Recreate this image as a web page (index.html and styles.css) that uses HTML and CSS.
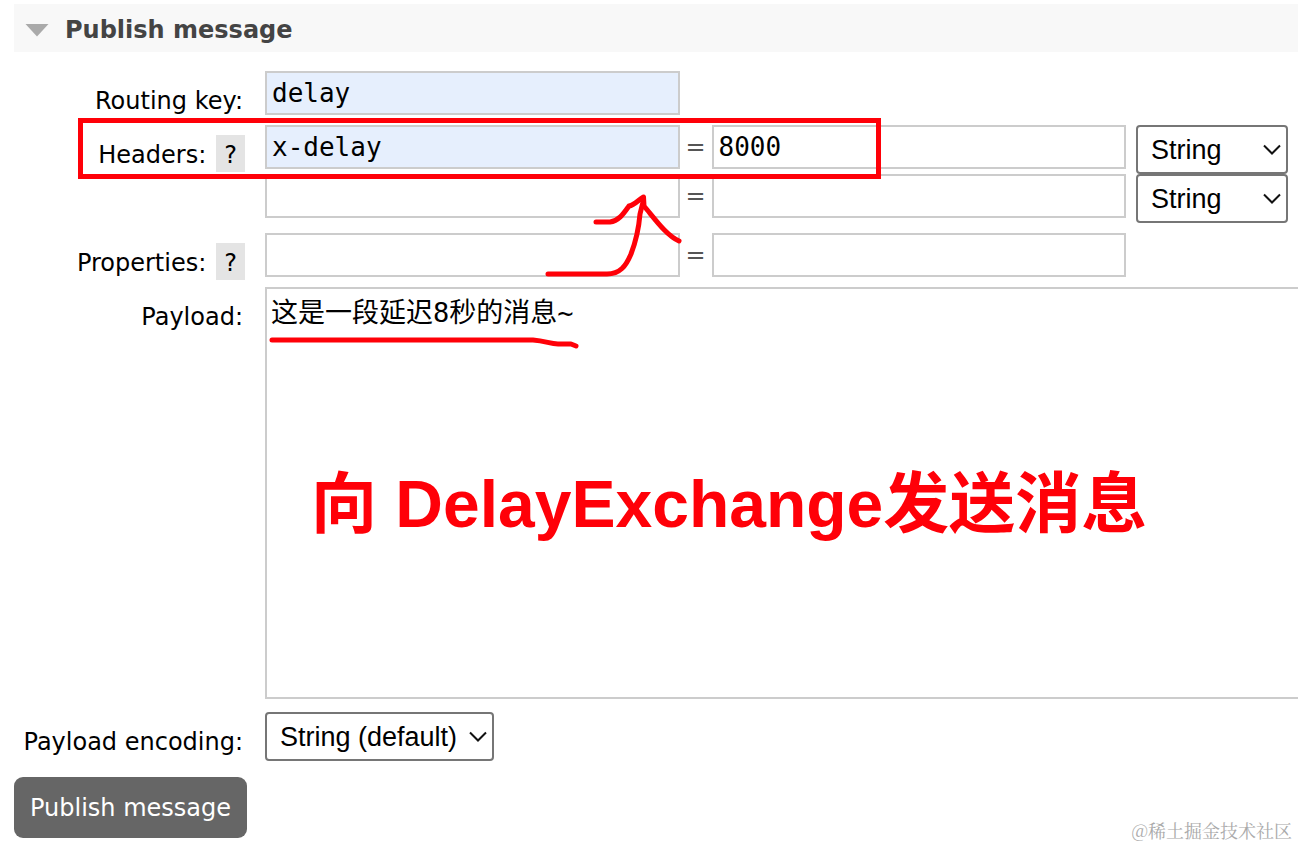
FILE: index.html
```
<!DOCTYPE html>
<html lang="zh-CN">
<head>
<meta charset="UTF-8" />
<meta name="viewport" content="width=device-width, initial-scale=1" />
<title>Publish message</title>
<link rel="stylesheet" href="styles.css">
</head>
<body>

<main class="section">
  <h2 class="section-title">
    <svg class="icon-toggle" width="24" height="14" viewBox="0 0 24 14">
      <path d="M0.5 1H23.5L12 13.5Z" fill="#aaa"/>
    </svg>
    Publish message
  </h2>

  <form class="publish-form">
    <div class="row">
      <div class="label"><label for="routingKey">Routing key:</label></div>
      <div class="fields">
        <input type="text" class="filled" id="routingKey" value="delay" />
      </div>
    </div>

    <div class="row">
      <div class="label"><label for="headerKey1">Headers:</label><button type="button" class="help">?</button></div>
      <div class="fields">
        <input type="text" class="filled" id="headerKey1" value="x-delay" />
        <span class="equals">=</span>
        <input type="text" aria-label="Header value" value="8000" />
        <div class="select">
          <select aria-label="Header type"><option>String</option><option>Number</option><option>Boolean</option></select>
          <svg class="chevron" width="18" height="12" viewBox="0 0 18 12"><path d="M1 1.5L9 9.5L17 1.5"/></svg>
        </div>
        <input type="text" aria-label="Header name 2" />
        <span class="equals">=</span>
        <input type="text" aria-label="Header value 2" />
        <div class="select">
          <select aria-label="Header type 2"><option>String</option><option>Number</option><option>Boolean</option></select>
          <svg class="chevron" width="18" height="12" viewBox="0 0 18 12"><path d="M1 1.5L9 9.5L17 1.5"/></svg>
        </div>
      </div>
    </div>

    <div class="row">
      <div class="label"><label for="propKey">Properties:</label><button type="button" class="help">?</button></div>
      <div class="fields">
        <input type="text" id="propKey" />
        <span class="equals">=</span>
        <input type="text" aria-label="Property value" />
      </div>
    </div>

    <div class="row">
      <div class="label"><label for="payload">Payload:</label></div>
      <div class="payload">
        <textarea id="payload">这是一段延迟8秒的消息~</textarea>
        <p class="note">向 DelayExchange发送消息</p>
      </div>
    </div>

    <div class="row encoding">
      <div class="label"><label for="encoding">Payload encoding:</label></div>
      <div class="select">
        <select id="encoding"><option>String (default)</option><option>Base64</option></select>
        <svg class="chevron" width="18" height="12" viewBox="0 0 18 12"><path d="M1 1.5L9 9.5L17 1.5"/></svg>
      </div>
    </div>

    <button type="submit" class="btn-publish">Publish message</button>
  </form>

  <!-- red marks over the form -->
  <svg class="marks" width="900" height="360" viewBox="0 0 900 360">
    <rect x="80.5" y="120.5" width="798" height="56" stroke-linejoin="miter"/>
    <path d="M548 274H607C620 274 626 266 631 254C636 241 639 226 640 214L643 202"/>
    <path d="M596 222H610C619 221 624 213 629 206C635 205 638 200 643.5 197L644 206C655 219 666 235 679 241"/>
    <path d="M272 340H533C546 341 550 344 558 344H571L576 346"/>
  </svg>
</main>

<footer class="watermark">@稀土掘金技术社区</footer>

</body>
</html>
```
FILE: styles.css
```
* { box-sizing: border-box; }

body {
  margin: 0;
  background: #fff;
  color: #000;
  font-family: "DejaVu Sans", "Noto Sans CJK SC", sans-serif;
  font-size: 24px;
  line-height: 32px;
  overflow-x: hidden;
}

.section {
  position: relative;
  padding: 4px 0 0 14px;
}

.section-title {
  display: flex;
  align-items: center;
  gap: 16px;
  height: 48px;
  margin: 0 0 19px;
  padding: 3px 11px 0;
  background: #f8f8f8;
  color: #444;
  font-size: 24px;
  font-weight: bold;
}

.publish-form {
  display: flex;
  flex-direction: column;
  gap: 10px;
}

.row {
  display: grid;
  grid-template-columns: 231px minmax(0, 1fr);
  column-gap: 20px;
  align-items: start;
}

.label {
  display: flex;
  justify-content: flex-end;
  gap: 8px;
  height: 44px;
  padding-top: 14px;
  white-space: nowrap;
}
.label label { margin-right: 2px; }

.help {
  height: 37px;
  margin-top: -4px;
  padding: 2px 8px 0;
  border: none;
  background: #e4e4e4;
  color: #000;
  font: inherit;
  cursor: pointer;
}

.fields {
  display: grid;
  grid-template-columns: minmax(0, 1fr) 32px minmax(0, 1fr) 162px;
  align-items: start;
  padding-right: 10px;
}
.fields .select { margin-left: 10px; }

input,
textarea {
  width: 100%;
  border: 2px solid #ccc;
  border-radius: 0;
  background: #fff;
  color: #000;
  font-family: "DejaVu Sans Mono", "Noto Sans CJK SC", monospace;
}
input {
  height: 44px;
  padding: 0 5px;
  font-size: 26px;
}
input.filled { background: #e6effd; }

.equals {
  color: #555;
  line-height: 44px;
  text-align: center;
}

.select {
  position: relative;
  display: flex;
}
select {
  width: 100%;
  height: 49px;
  padding: 0 13px;
  border: 2px solid #767676;
  border-radius: 4px;
  background: #fff;
  color: #000;
  font-family: "Liberation Sans", Arial, sans-serif;
  font-size: 27px;
  appearance: none;
}
.chevron {
  position: absolute;
  top: 19px;
  right: 7px;
  fill: none;
  stroke: #111;
  stroke-width: 2;
  pointer-events: none;
}

.payload { position: relative; }
textarea {
  display: block;
  height: 412px;
  padding: 2px 4px;
  border-right: none;
  font-size: 27px;
  resize: none;
}
.note {
  position: absolute;
  top: 169px;
  left: 46px;
  margin: 0;
  color: #ff0008;
  font-family: "Liberation Sans", "Noto Sans CJK SC", sans-serif;
  font-size: 66px;
  font-weight: bold;
  line-height: 96px;
  white-space: nowrap;
}

.encoding { margin: 3px 0 6px; }
.encoding .select { width: 229px; }

.btn-publish {
  align-self: flex-start;
  height: 61px;
  padding: 0 16px;
  border: none;
  border-radius: 9px;
  background: #666;
  color: #fff;
  font: inherit;
  cursor: pointer;
}

.marks {
  position: absolute;
  top: 0;
  left: 0;
  fill: none;
  stroke: #ff0008;
  stroke-width: 5;
  stroke-linecap: round;
  stroke-linejoin: round;
  pointer-events: none;
}

.watermark {
  position: absolute;
  right: 6px;
  bottom: 6px;
  color: #aaa;
  font-family: "Noto Serif CJK SC", "Noto Sans CJK SC", serif;
  font-size: 18px;
  line-height: 24px;
}
```
